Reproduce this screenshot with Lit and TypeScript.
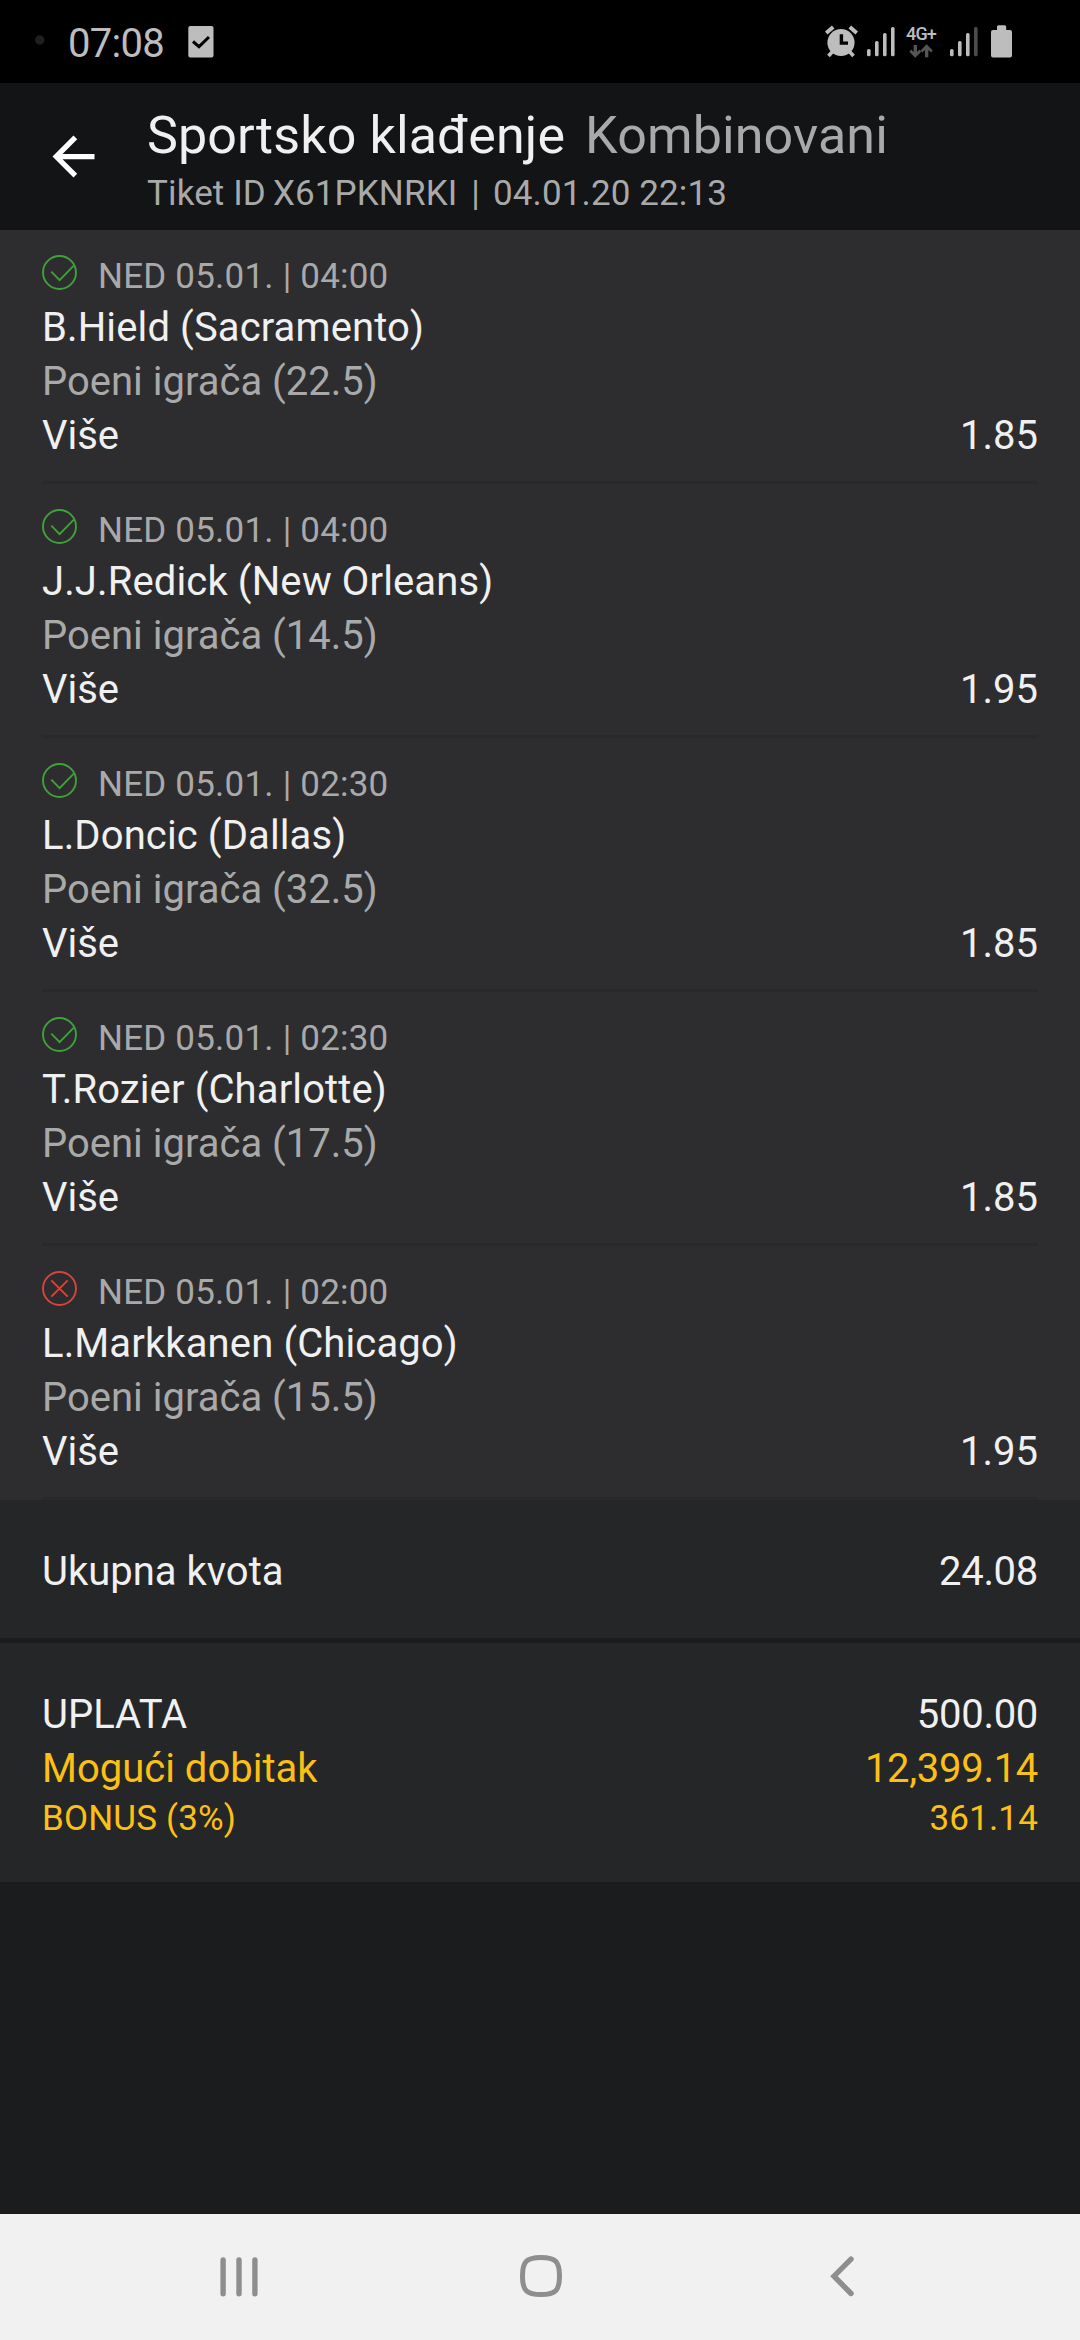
import { LitElement, html, css, svg } from "lit";
import { customElement, property } from "lit/decorators.js";
import { classMap } from "lit/directives/class-map.js";

interface Bet {
  won: boolean;
  date: string;
  player: string;
  market: string;
  pick: string;
  odds: string;
}

const BETS: Bet[] = [
  { won: true, date: "NED 05.01. | 04:00", player: "B.Hield (Sacramento)", market: "Poeni igrača (22.5)", pick: "Više", odds: "1.85" },
  { won: true, date: "NED 05.01. | 04:00", player: "J.J.Redick (New Orleans)", market: "Poeni igrača (14.5)", pick: "Više", odds: "1.95" },
  { won: true, date: "NED 05.01. | 02:30", player: "L.Doncic (Dallas)", market: "Poeni igrača (32.5)", pick: "Više", odds: "1.85" },
  { won: true, date: "NED 05.01. | 02:30", player: "T.Rozier (Charlotte)", market: "Poeni igrača (17.5)", pick: "Više", odds: "1.85" },
  { won: false, date: "NED 05.01. | 02:00", player: "L.Markkanen (Chicago)", market: "Poeni igrača (15.5)", pick: "Više", odds: "1.95" },
];

@customElement("status-bar")
class StatusBar extends LitElement {
  static styles = css`
    :host {
      display: flex;
      align-items: flex-start;
      justify-content: space-between;
      box-sizing: border-box;
      height: 83px;
      padding: 0 68px 0 35px;
      background: #000;
      color: #bdbdbd;
    }
    .group { display: flex; align-items: flex-start; }
    svg { display: block; fill: currentColor; }
    .time {
      padding: 20px 0 0 23px;
      margin-right: 22px;
      width: 98px;
      font-size: 40px;
      line-height: 47px;
      letter-spacing: -0.7px;
    }
    .alarm { margin-right: 9px; }
    .network {
      display: flex;
      flex-direction: column;
      align-items: center;
      width: 32px;
      margin: 23px 13px 0 10px;
    }
    .label {
      font-size: 18px;
      font-weight: 500;
      line-height: 21px;
      letter-spacing: -0.8px;
      white-space: nowrap;
    }
    .arrows { color: #555; }
    .battery { margin-left: 13px; }
  `;

  private signal(level: number) {
    const bars = [[0, 49], [8, 41], [16, 33], [24, 27]];
    return html`<svg width="28" height="83" viewBox="0 0 28 83">
      ${bars.map(([x, y], i) => svg`<rect x=${x} y=${y} width="3.6" height=${56.3 - y} rx="1.6"
        fill=${i < level ? "#bdbdbd" : "#4c4c4c"} />`)}
    </svg>`;
  }

  render() {
    return html`
      <div class="group">
        <svg width="10" height="83" viewBox="0 0 10 83"><circle cx="4.8" cy="40" r="4.7" fill="#1f1f1f" /></svg>
        <span class="time">07:08</span>
        <svg width="26" height="83" viewBox="0 0 26 83">
          <rect x="0.3" y="26" width="25.2" height="31.5" rx="2" />
          <path d="M5 41.5l6 5.2L21 37" fill="none" stroke="#000" stroke-width="3" />
        </svg>
      </div>
      <div class="group">
        <svg class="alarm" width="33" height="83" viewBox="0 0 33 83">
          <circle cx="16" cy="42.5" r="13.6" />
          <path d="M1.2 33l7-6M31.8 33l-7-6" fill="none" stroke="currentColor" stroke-width="4" />
          <path d="M8 51l-4.5 5M24 51l4.5 5" fill="none" stroke="currentColor" stroke-width="3.6" />
          <path d="M16.4 34.2v8.9h6.6" fill="none" stroke="#000" stroke-width="3.4" />
        </svg>
        ${this.signal(4)}
        <div class="network">
          <span class="label">4G+</span>
          <svg class="arrows" width="24" height="15" viewBox="0 0 24 15">
            <path d="M4.6 1h3.4v7l2.6-2.6 1.6 2.4-5.9 6-5.9-6 1.8-2.4 2.4 2.6z" />
            <path d="M16 13.2h3.3V6l2.8 2.6 1.6-2.2-6.1-6.2-6 6.2 1.8 2.2L16 6z" />
          </svg>
        </div>
        ${this.signal(3)}
        <svg class="battery" width="21" height="83" viewBox="0 0 21 83">
          <path d="M2 30h4v-3.3a1.5 1.5 0 0 1 1.5-1.5h6.2a1.5 1.5 0 0 1 1.5 1.5V30H19a2 2 0 0 1 2 2v23.6a2 2 0 0 1-2 2H2a2 2 0 0 1-2-2V32a2 2 0 0 1 2-2z" />
        </svg>
      </div>`;
  }
}

@customElement("ticket-header")
class TicketHeader extends LitElement {
  static styles = css`
    :host {
      display: flex;
      align-items: flex-start;
      box-sizing: border-box;
      height: 147px;
      padding: 22px 42px 0;
      background: #121416;
      color: #a9a9a9;
    }
    .back { display: block; margin: 20px 42px 0 0; fill: #fff; }
    .titles { display: flex; flex-direction: column; gap: 7px; }
    .row { display: flex; white-space: nowrap; }
    .heading { gap: 20px; font-size: 52px; line-height: 61px; letter-spacing: 0.12px; }
    .title { color: #f0f0f0; }
    .meta { font-size: 35px; line-height: 41px; letter-spacing: 0.12px; }
    .ticket-id { margin-left: 7px; }
    .bar { margin: 0 13px 0 14px; }
  `;

  render() {
    return html`
      <svg class="back" width="63" height="63" viewBox="0 0 24 24">
        <path d="M20 11H7.83l5.59-5.59L12 4l-8 8 8 8 1.41-1.41L7.83 13H20v-2z" />
      </svg>
      <div class="titles">
        <div class="row heading"><span class="title">Sportsko klađenje</span><span>Kombinovani</span></div>
        <div class="row meta">
          <span>Tiket ID</span><span class="ticket-id">X61PKNRKI</span><span class="bar">|</span><span>04.01.20 22:13</span>
        </div>
      </div>`;
  }
}

@customElement("bet-row")
class BetRow extends LitElement {
  static styles = css`
    :host {
      display: flex;
      flex-direction: column;
      gap: 7px;
      box-sizing: border-box;
      height: 254px;
      margin: 0 42px;
      padding-top: 26px;
      border-bottom: 3px solid #28292b;
      font-size: 40px;
      line-height: 47px;
      color: #f0f0f0;
      white-space: nowrap;
    }
    .when {
      display: flex;
      align-items: flex-start;
      gap: 21px;
      font-size: 35px;
      line-height: 41px;
      letter-spacing: 0.21px;
    }
    .when, .market { color: #a9a9a9; }
    .player { letter-spacing: 0.12px; }
    .pick { display: flex; justify-content: space-between; }
    .icon { display: block; margin-top: -1px; fill: none; stroke-width: 1.9; }
    .won { stroke: #3fa238; }
    .lost { stroke: #d8433c; }
  `;

  @property({ attribute: false }) bet!: Bet;

  render() {
    const b = this.bet;
    return html`
      <div class="when">
        <svg class=${classMap({ icon: true, won: b.won, lost: !b.won })} width="35" height="35" viewBox="0 0 35 35">
          <circle cx="17.5" cy="17.5" r="16.5" />
          ${b.won
            ? svg`<path d="M9.3 16.7l8.3 8.5L31.8 10.6" />`
            : svg`<path d="M9.3 9.3l16.4 16.4M25.7 9.3L9.3 25.7" />`}
        </svg>
        <span>${b.date}</span>
      </div>
      <div class="player">${b.player}</div>
      <div class="market">${b.market}</div>
      <div class="pick"><span>${b.pick}</span><span>${b.odds}</span></div>`;
  }
}

@customElement("nav-bar")
class NavBar extends LitElement {
  static styles = css`
    :host {
      display: flex;
      align-items: center;
      box-sizing: border-box;
      height: 126px;
      padding: 0 87px 0 88px;
      background: #f1f1f1;
    }
    .cell { flex: 1; display: flex; justify-content: center; }
    svg { display: block; fill: none; stroke: #8e8e8e; stroke-linecap: round; }
  `;

  render() {
    return html`
      <div class="cell">
        <svg width="44" height="44" viewBox="0 0 44 44" stroke-width="5.4">
          <path d="M6.1 4.9v33.8M22 4.9v33.8M37.9 4.9v33.8" />
        </svg>
      </div>
      <div class="cell">
        <svg width="44" height="44" viewBox="0 0 44 44" stroke-width="5">
          <path d="M22 2.5c14.5 0 18.5 4 18.5 18.5S36.500 39.500 22 39.500 3.500 35.500 3.500 21 7.500 2.500 22 2.500z" />
        </svg>
      </div>
      <div class="cell">
        <svg width="44" height="44" viewBox="0 0 44 44" stroke-width="5.400">
          <path d="M31 4.200L14 21.200L31 38.500" />
        </svg>
      </div>`;
  }
}

@customElement("app-root")
class AppRoot extends LitElement {
  static styles = css`
    :host {
      display: flex;
      flex-direction: column;
      height: 2340px;
      overflow: hidden;
      background: #1b1c1e;
      font-family: Roboto, sans-serif;
      color: #f0f0f0;
    }
    .bets { background: #2d2d2f; }
    .panel {
      display: flex;
      flex-direction: column;
      padding: 48px 42px 43px;
      background: #252628;
      font-size: 40px;
      line-height: 47px;
      white-space: nowrap;
    }
    .payout { margin-top: 5px; }
    .line { display: flex; justify-content: space-between; }
    .amount { letter-spacing: -0.3px; }
    .win { margin-top: 7px; color: #fcc015; }
    .bonus {
      margin-top: 6px;
      font-size: 35px;
      line-height: 41px;
      letter-spacing: 0.17px;
      color: #fcc015;
    }
    .filler { flex: 1; }
  `;

  render() {
    return html`
      <status-bar></status-bar>
      <ticket-header></ticket-header>
      <div class="bets">${BETS.map((bet) => html`<bet-row .bet=${bet}></bet-row>`)}</div>
      <div class="panel">
        <div class="line"><span>Ukupna kvota</span><span class="amount">24.08</span></div>
      </div>
      <div class="panel payout">
        <div class="line"><span>UPLATA</span><span class="amount">500.00</span></div>
        <div class="line win"><span>Mogući dobitak</span><span class="amount">12,399.14</span></div>
        <div class="line bonus"><span>BONUS (3%)</span><span>361.14</span></div>
      </div>
      <div class="filler"></div>
      <nav-bar></nav-bar>`;
  }
}
